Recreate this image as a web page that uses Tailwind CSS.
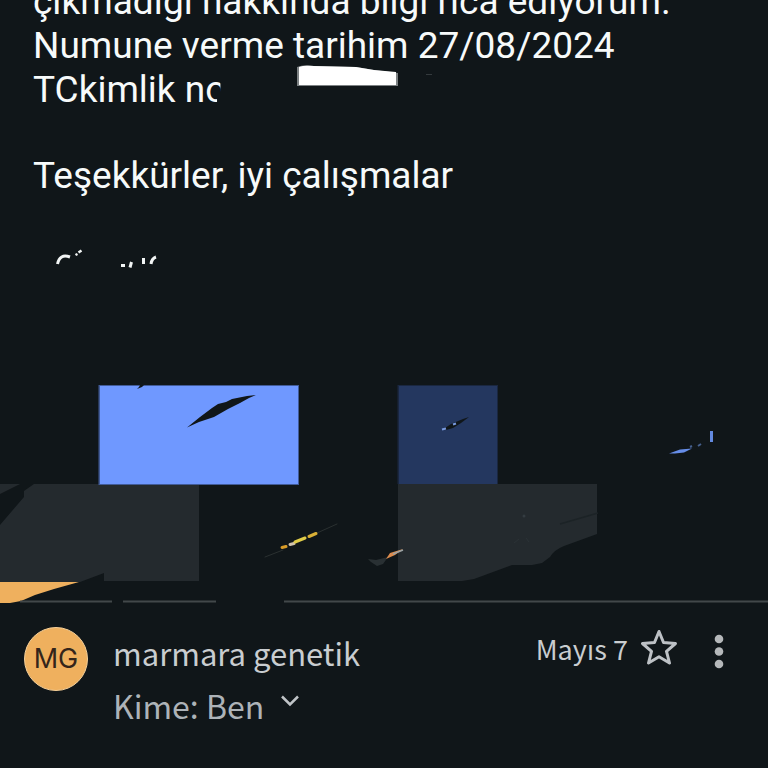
<!DOCTYPE html>
<html lang="tr">
<head>
<meta charset="utf-8">
<meta name="viewport" content="width=device-width, initial-scale=1">
<title>E-posta</title>
<script src="https://cdn.jsdelivr.net/npm/@tailwindcss/browser@4"></script>
</head>
<body class="min-h-screen overflow-hidden bg-[#101619]">
<main class="flex min-h-screen w-full flex-col">
  <article class="relative h-[220px] overflow-hidden px-[33px] font-[Roboto,sans-serif] text-[37px] text-[#f7fafa]">
    <p class="-mt-5 whitespace-nowrap leading-[44px]">çıkmadığı hakkında bilgi rica ediyorum.<br>Numune verme tarihim 27/08/2024<br>TCkimlik n<span class="inline-block [clip-path:polygon(0_0,72%_0,72%_52%,56%_64%,56%_100%,0_100%)]">o</span></p>
    <p class="mt-[42px] whitespace-nowrap leading-[44px]">Teşekkürler, iyi çalışmalar</p>
    <svg class="absolute left-[296px] top-[64px] h-6 w-[140px]" viewBox="0 0 140 24" aria-hidden="true">
      <path d="M1 3Q8 0 18 2L60 3 78 6 102 9V22H1Z" fill="#7c8183"/>
      <path d="M3 3Q8 1 18 2L60 3 78 6 100 8V21H3Z" fill="#fff"/>
      <path d="M130 10.500h6" stroke="#343a3d"/>
    </svg>
  </article>

  <svg class="block h-auto w-full shrink-0" viewBox="0 220 768 384" aria-hidden="true">
    <g fill="none" stroke="#f2f5f5" stroke-width="3">
      <path d="M57.500 264C59 257 63 254.500 70 257"/>
      <path d="M75.500 255l2-1M78.500 252.500l3-2" stroke-width="2.500"/>
      <path d="M121 265.500h4M130 267.500l1.500-5.500M143.500 264v-6M151 264c.5-4 2-6 5-7"/>
    </g>
    <path d="M0 484H20L0 494ZM34 484H199V581H104V573L80 582H0V525L24 497V491Z" fill="#242a2e"/>
    <path d="M398 484H597V534L564 546Q554 550 550 557L542 563 532 565H512L474 579 462 581H398Z" fill="#242a2e"/>
    <path d="M98.500 385H299V485H98.500Z" fill="#415b98"/>
    <path d="M100 386H298V484H100Z" fill="#6f98ff"/>
    <path d="M137 389l2-2 1-2h4l-2 2Z" fill="#101619"/>
    <path d="M187 427.500L200 417 212 408 218 404 226 402 232 399 247 396 256 395 249 398 240 403 228 409 214 417 199 422Z" fill="#101619"/>
    <path d="M397.500 385H498V484H397.500Z" fill="#1a2740"/>
    <path d="M399 386H497V484H399Z" fill="#24375f"/>
    <path d="M442 430l9-6 12-5 6-2-8 6-8 5-7 2Z" fill="#101619"/>
    <path d="M442 429.500l4-1M453 424.500l3-1" stroke="#7899dc" stroke-width="2"/>
    <path d="M560 524l38-11" stroke="#1c2326" stroke-width="1.500"/>
    <circle cx="524" cy="516" r="1.500" fill="#343c41"/>
    <path d="M514 543l5-4M526 538l3 4" stroke="#2b3236"/>
    <path d="M0 582H79L54 589 35 595 21 601 10 603H0Z" fill="#efb05e"/>
    <path d="M20 601.500H112M123 601.500H216M284 601.500H768" stroke="#42484a" stroke-width="2"/>
    <g fill="none" stroke-linecap="round">
      <path d="M265 557l18-7M317 533l20-9" stroke="#2a3030"/>
      <path d="M282 547.500l4-1" stroke="#d99b27" stroke-width="3"/>
      <path d="M290 544.500l4-1" stroke="#d3c3ac" stroke-width="3"/>
      <path d="M295 542l10-4" stroke="#e0cc48" stroke-width="3"/>
      <path d="M309 536.500l7-3" stroke="#d9b036" stroke-width="3"/>
    </g>
    <path d="M368 559l8 1 12-3-5 7-6 2-6-4Z" fill="#293033"/>
    <path d="M386 559l4-6 13-4-8 6Z" fill="#dc8c4e"/>
    <path d="M393 554l10-4" stroke="#9ca2a3" stroke-width="1.500"/>
    <path d="M669 453.500l11-4 12-1-8 4-9 1Z" fill="#668de8"/>
    <path d="M690 447l2-1M698 446l3-2" stroke="#46608e" stroke-width="2"/>
    <path d="M711.500 431v11" stroke="#638ae0" stroke-width="3"/>
  </svg>

  <header class="flex items-start pl-6 pr-11 pt-[23px] font-['Noto_Sans_CJK_SC',sans-serif]">
    <div class="flex size-16 shrink-0 items-center justify-center rounded-full border border-[#f5cf98] bg-[#efb05e] font-[Inter,sans-serif] text-[27px] text-[#34251a]">MG</div>
    <div class="ml-[25px] min-w-0 flex-1">
      <h2 class="whitespace-nowrap text-[31px] leading-[52px] text-[#c9cdd0]">marmara genetik</h2>
      <button type="button" class="flex items-center whitespace-nowrap text-[32px] leading-[52px] text-[#adb3b8]">Kime: Ben
        <svg class="mb-2 ml-4 h-3 w-5" viewBox="0 0 20 12" fill="none" stroke="#c0c4c7" stroke-width="2.500" aria-hidden="true"><path d="M2 1.500L10 9.500 18 1.500"/></svg>
      </button>
    </div>
    <time class="whitespace-nowrap text-[27px] leading-[44px] text-[#c9cdd0]">Mayıs 7</time>
    <button type="button" aria-label="Yıldız ekle" class="ml-3 mt-0.5">
      <svg class="h-9 w-[38px]" viewBox="0 0 38 36" fill="none" stroke="#bdc1c5" stroke-width="3" stroke-linejoin="round" aria-hidden="true"><path d="M19 2.500L23.500 13.500 35.500 14.500 26.500 22.300 29.500 34 19 27.800 8.500 34 11.500 22.300 2.500 14.500 14.500 13.500Z"/></svg>
    </button>
    <button type="button" aria-label="Diğer seçenekler" class="ml-9 mt-[7px]">
      <svg class="h-9 w-[10px]" viewBox="0 0 10 36" fill="#b5b8ba" aria-hidden="true"><circle cx="5" cy="5" r="4.300"/><circle cx="5" cy="17.500" r="4.300"/><circle cx="5" cy="30" r="4.300"/></svg>
    </button>
  </header>
</main>
</body>
</html>
